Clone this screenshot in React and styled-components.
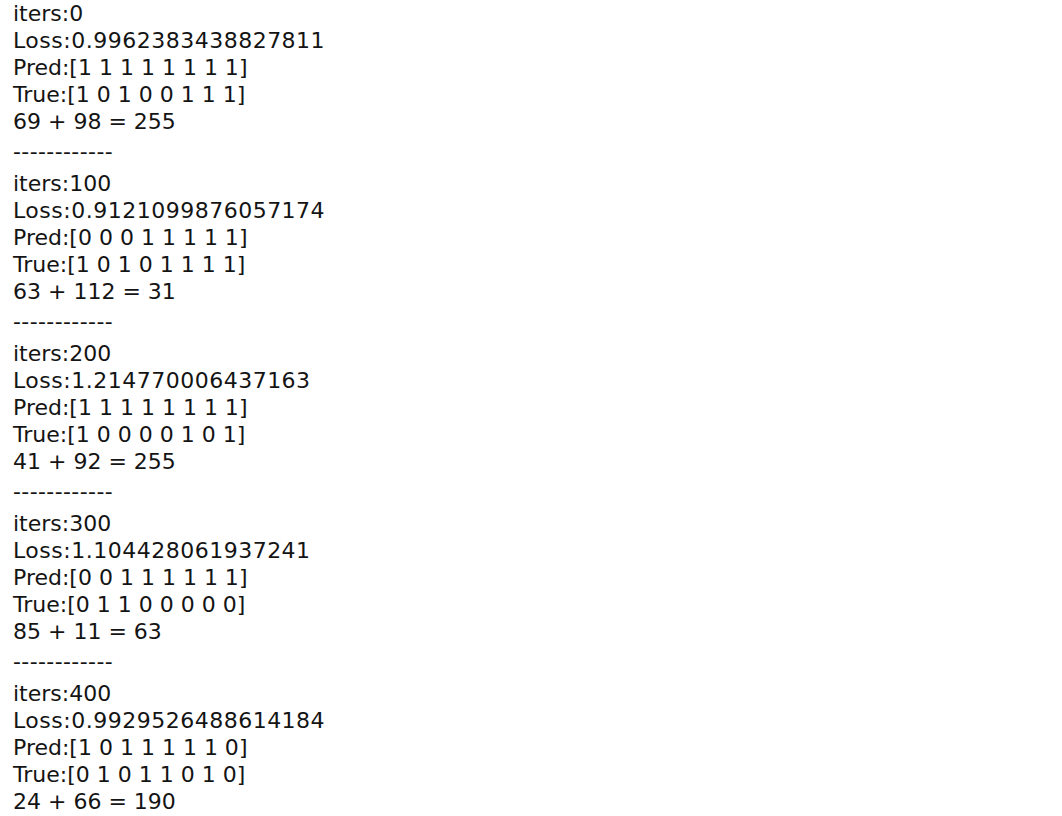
import React from "react";
import styled, { createGlobalStyle } from "styled-components";

const GlobalStyle = createGlobalStyle`
  html, body {
    margin: 0;
    padding: 0;
    background: #ffffff;
  }
`;

const Output = styled.div`
  padding: 0 0 0 13px;
  font-family: "DejaVu Sans", "Liberation Sans", sans-serif;
  font-size: 22px;
  line-height: 27px;
  color: #141414;
  white-space: pre;
`;

const Line = styled.div`
  height: 27px;
  letter-spacing: ${(p) => (p.$wide ? "0.5px" : "0")};
`;

const Separator = styled.div`
  height: 27px;
  margin: 3px 0 5px;
  letter-spacing: 0.4px;
`;

const runs = [
  { iter: 0, loss: "0.9962383438827811", pred: "1 1 1 1 1 1 1 1", truth: "1 0 1 0 0 1 1 1", sum: "69 + 98 = 255" },
  { iter: 100, loss: "0.9121099876057174", pred: "0 0 0 1 1 1 1 1", truth: "1 0 1 0 1 1 1 1", sum: "63 + 112 = 31" },
  { iter: 200, loss: "1.214770006437163", pred: "1 1 1 1 1 1 1 1", truth: "1 0 0 0 0 1 0 1", sum: "41 + 92 = 255" },
  { iter: 300, loss: "1.104428061937241", pred: "0 0 1 1 1 1 1 1", truth: "0 1 1 0 0 0 0 0", sum: "85 + 11 = 63" },
  { iter: 400, loss: "0.9929526488614184", pred: "1 0 1 1 1 1 1 0", truth: "0 1 0 1 1 0 1 0", sum: "24 + 66 = 190" },
];

const Run = ({ run }) => (
  <>
    <Line>iters:{run.iter}</Line>
    <Line $wide>Loss:{run.loss}</Line>
    <Line>Pred:[{run.pred}]</Line>
    <Line>True:[{run.truth}]</Line>
    <Line>{run.sum}</Line>
  </>
);

const App = () => {
  return (
    <>
      <GlobalStyle />
      <Output>
        {runs.map((run, i) => (
          <React.Fragment key={run.iter}>
            <Run run={run} />
            {i < runs.length - 1 && <Separator>------------</Separator>}
          </React.Fragment>
        ))}
      </Output>
    </>
  );
};

export default App;
